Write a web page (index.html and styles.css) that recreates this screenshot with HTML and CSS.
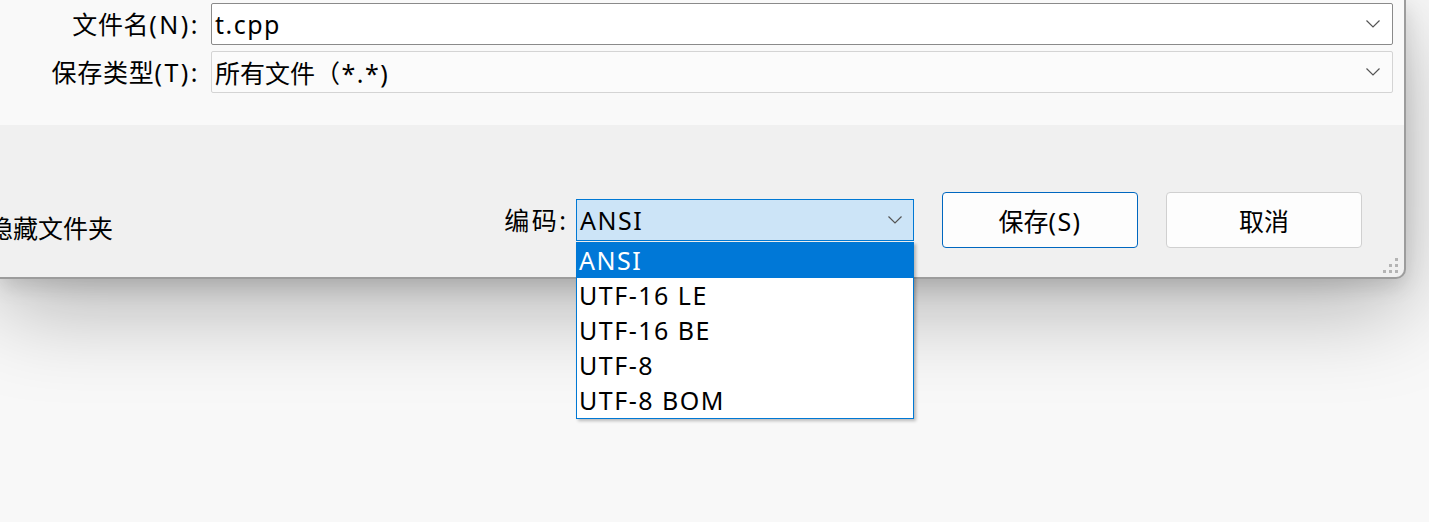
FILE: index.html
```html
<!DOCTYPE html>
<html lang="zh-CN">
<head>
<meta charset="utf-8">
<title>另存为</title>
<link rel="stylesheet" href="styles.css">
</head>
<body>
<div class="dialog">
  <div class="fields">
    <div class="row">
      <label class="label">文件名<span class="lat">(N):</span></label>
      <div class="field field-edit">
        <span class="value lat">t.cpp</span>
        <svg class="chev" width="14" height="8" viewBox="0 0 14 8"><path d="M0.5 0.5 L7 7 L13.5 0.5" fill="none" stroke="#555" stroke-width="1.2"/></svg>
      </div>
    </div>
    <div class="row">
      <label class="label">保存类型<span class="lat">(T):</span></label>
      <div class="field field-type">
        <span class="value">所有文件<span class="lat">（*.*)</span></span>
        <svg class="chev" width="14" height="8" viewBox="0 0 14 8"><path d="M0.5 0.5 L7 7 L13.5 0.5" fill="none" stroke="#555" stroke-width="1.2"/></svg>
      </div>
    </div>
  </div>
  <div class="footer">
    <span class="hide-folders">隐藏文件夹</span>
    <div class="spacer"></div>
    <div class="encoding">
      <span class="enc-label">编码<span class="lat">:</span></span>
      <div class="combo-wrap">
        <div class="combo">
          <span class="value lat">ANSI</span>
          <svg class="chev" width="14" height="8" viewBox="0 0 14 8"><path d="M0.5 0.5 L7 7 L13.5 0.5" fill="none" stroke="#555" stroke-width="1.2"/></svg>
        </div>
        <ul class="list lat">
          <li class="item selected">ANSI</li>
          <li class="item">UTF-16 LE</li>
          <li class="item">UTF-16 BE</li>
          <li class="item">UTF-8</li>
          <li class="item">UTF-8 BOM</li>
        </ul>
      </div>
    </div>
    <button class="btn btn-primary">保存<span class="lat">(S)</span></button>
    <button class="btn">取消</button>
    <div class="grip">
      <i class="g1"></i><i class="g2"></i><i class="g3"></i><i class="g4"></i><i class="g5"></i><i class="g6"></i>
    </div>
  </div>
</div>
</body>
</html>
```
FILE: styles.css
```css
* { box-sizing: border-box; }
html, body {
  margin: 0;
  padding: 0;
}
body {
  width: 1429px;
  height: 522px;
  overflow: hidden;
  background: #f8f8f8;
  font-family: "Noto Sans", "Noto Sans CJK SC", sans-serif;
  font-size: 25px;
  color: #000;
}
.lat {
  letter-spacing: 1.5px;
}
.dialog {
  position: relative;
  width: 1406px;
  height: 279px;
  border-right: 2px solid #9c9c9c;
  border-bottom: 2px solid #9c9c9c;
  border-bottom-right-radius: 10px;
  background: #f0f0f0;
  box-shadow: 0 30px 90px rgba(0,0,0,0.28), 0 8px 20px rgba(0,0,0,0.12);
}
.fields {
  height: 125px;
  background: #f9f9f9;
  padding-top: 3px;
  display: flex;
  flex-direction: column;
  gap: 6px;
}
.row {
  display: flex;
  align-items: center;
  height: 42px;
}
.label {
  width: 200px;
  text-align: right;
  margin-right: 11px;
  white-space: nowrap;
  margin-top: -3px;
  letter-spacing: 0.7px;
}
.label .lat { letter-spacing: 2.5px; }
.field {
  width: 1182px;
  height: 42px;
  display: flex;
  align-items: center;
  padding-left: 3px;
  padding-right: 12px;
  border-radius: 2px;
}
.field-edit {
  background: #fff;
  border: 1px solid #8a8a8a;
}
.field-type {
  background: #fbfbfb;
  border: 1px solid #d4d4d4;
}
.value {
  flex: 1;
  white-space: nowrap;
}
.chev { flex: none; }
.footer {
  position: relative;
  height: 152px;
  display: flex;
  align-items: flex-start;
  padding-right: 42px;
}
.hide-folders {
  margin-left: -12px;
  margin-top: 84px;
  white-space: nowrap;
}
.spacer { flex: 1; }
.encoding {
  display: flex;
  align-items: center;
  margin-top: 74px;
}
.enc-label {
  margin-right: 8px;
  margin-top: -3px;
  letter-spacing: 2.5px;
}
.enc-label .lat { letter-spacing: 2px; }
.combo-wrap {
  position: relative;
  width: 338px;
}
.combo {
  height: 42px;
  background: #cce4f7;
  border: 1px solid #0078d4;
  display: flex;
  align-items: center;
  padding-left: 3px;
  padding-right: 11px;
}
.list {
  position: absolute;
  left: 0;
  top: 43px;
  width: 338px;
  margin: 0;
  padding: 0;
  list-style: none;
  background: #fff;
  border: 1px solid #0078d4;
  box-shadow: 2px 2px 3px rgba(0,0,0,0.25);
  z-index: 2;
}
.item {
  height: 35px;
  line-height: 35px;
  padding-left: 2px;
  white-space: nowrap;
}
.item.selected {
  background: #0078d7;
  color: #fff;
}
.btn {
  font: inherit;
  color: #000;
  width: 196px;
  height: 56px;
  margin-top: 67px;
  margin-left: 28px;
  background: #fdfdfd;
  border: 1px solid #d0d0d0;
  border-radius: 4px;
  padding: 0;
}
.btn-primary {
  border-color: #0067c0;
}
.grip {
  position: absolute;
  right: 6px;
  bottom: 4px;
  width: 15px;
  height: 15px;
}
.grip i {
  position: absolute;
  width: 3px;
  height: 3px;
  background: #b4b4b4;
}
.grip .g1 { left: 12px; top: 0; }
.grip .g2 { left: 6px; top: 6px; }
.grip .g3 { left: 12px; top: 6px; }
.grip .g4 { left: 0; top: 12px; }
.grip .g5 { left: 6px; top: 12px; }
.grip .g6 { left: 12px; top: 12px; }
```
